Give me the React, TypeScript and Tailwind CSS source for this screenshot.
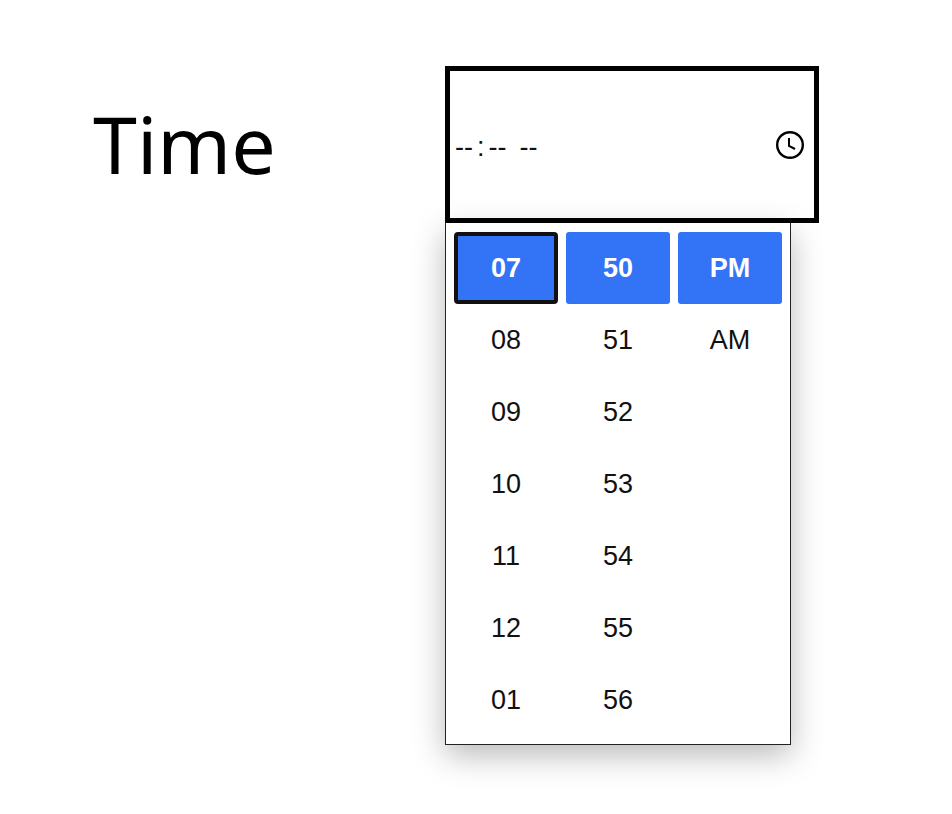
import React from "react";

const columns = [
  ["07", "08", "09", "10", "11", "12", "01"],
  ["50", "51", "52", "53", "54", "55", "56"],
  ["PM", "AM"],
];

function ClockIcon() {
  return (
    <svg width="30" height="30" viewBox="0 0 30 30" fill="none" stroke="#000" strokeWidth="2.4">
      <circle cx="15" cy="15" r="12.8" />
      <path d="M14 8v8l6 3" strokeWidth="2" />
    </svg>
  );
}

export default function App() {
  return (
    <div className="min-h-[814px] w-[952px] bg-white font-['Liberation_Sans',Arial,sans-serif] text-black">
      <div className="flex items-start pl-[93px] pt-[66px]">
        <div className="w-[352px] pt-[23px] font-['Noto_Sans',sans-serif] text-[79px] leading-[109px]">Time</div>

        <div className="relative">
          <div className="flex h-[157px] w-[374px] items-center justify-between border-[5px] border-black pl-[5px] pr-[9px]">
            {/* segments of the empty time field */}
            <div className="flex pt-[5px] text-[27px] leading-none text-[#111]">
              <span>--</span>
              <span className="mx-[4px]">:</span>
              <span>--</span>
              <span className="ml-[13px]">--</span>
            </div>
            <ClockIcon />
          </div>

          {/* open dropdown */}
          <div className="absolute left-0 top-[157px] flex h-[522px] w-[346px] gap-2 border border-t-0 border-[#222] bg-white pl-2 pt-[9px] shadow-[0_10px_30px_rgba(0,0,0,0.28)]">
            {columns.map((col, c) => (
              <div key={c} className="flex w-[104px] flex-col">
                {col.map((item, i) => (
                  <div
                    key={item}
                    className={
                      i === 0
                        ? c === 0
                          ? "flex h-[72px] items-center justify-center rounded-[4px] border-[4px] border-[#111] bg-[#3374f6] text-[27px] font-bold text-white"
                          : "flex h-[72px] items-center justify-center rounded-[3px] bg-[#3374f6] text-[27px] font-bold text-white"
                        : "flex h-[72px] items-center justify-center text-[27px] text-[#111]"
                    }
                  >
                    {item}
                  </div>
                ))}
              </div>
            ))}
          </div>
        </div>
      </div>
    </div>
  );
}
